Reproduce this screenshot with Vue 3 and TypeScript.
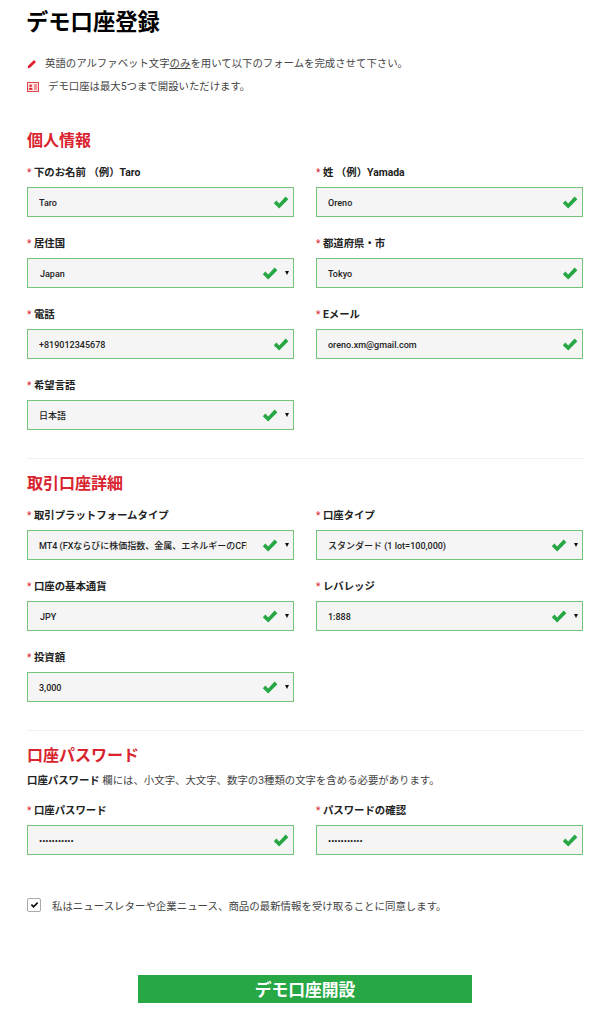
<script setup lang="ts">
interface Field { label: string; value: string; select?: boolean; full?: boolean; pad?: boolean }
const personal: Field[] = [
  { label: '下のお名前 （例）Taro', value: 'Taro' },
  { label: '姓 （例）Yamada', value: 'Oreno' },
  { label: '居住国', value: 'Japan', select: true, pad: true },
  { label: '都道府県・市', value: 'Tokyo' },
  { label: '電話', value: '+819012345678' },
  { label: 'Eメール', value: 'oreno.xm@gmail.com' },
  { label: '希望言語', value: '日本語', select: true },
]
const account: Field[] = [
  { label: '取引プラットフォームタイプ', value: 'MT4 (FXならびに株価指数、金属、エネルギーのCFD取引)', select: true },
  { label: '口座タイプ', value: 'スタンダード (1 lot=100,000)', select: true },
  { label: '口座の基本通貨', value: 'JPY', select: true, pad: true },
  { label: 'レバレッジ', value: '1:888', select: true },
  { label: '投資額', value: '3,000', select: true },
]
const password: Field[] = [
  { label: '口座パスワード', value: '•••••••••••' },
  { label: 'パスワードの確認', value: '•••••••••••' },
]
const sections = [
  { title: '個人情報', fields: personal, note: false },
  { title: '取引口座詳細', fields: account, note: false },
  { title: '口座パスワード', fields: password, note: true },
]
</script>

<template>
  <main class="page">
    <h1 class="title">デモ口座登録</h1>
    <p class="info first">
      <svg class="pencil" viewBox="0 0 10 10"><path d="M7 1l2 2-5.6 5.6-2.9.9.9-2.9z" fill="#d9232e" /></svg>
      <span>英語のアルファベット文字<u>のみ</u>を用いて以下のフォームを完成させて下さい。</span>
    </p>
    <p class="info second">
      <svg class="card" viewBox="0 0 12 10">
        <rect x=".5" y=".5" width="11" height="9" fill="#fde8e8" stroke="#e2444f" />
        <circle cx="3.6" cy="3.8" r="1.3" fill="#d9232e" />
        <path d="M1.6 7.8c0-2.6 4-2.6 4 0z" fill="#d9232e" />
        <path d="M7 3h3.2M7 5h3.2M7 7h3.2" stroke="#e2444f" />
      </svg>
      <span>デモ口座は最大5つまで開設いただけます。</span>
    </p>

    <section v-for="(s, i) in sections" :key="s.title" :class="['section', `section-${i}`]">
      <h2 class="heading">{{ s.title }}</h2>
      <p v-if="s.note" class="note"><b>口座パスワード</b> 欄には、小文字、大文字、数字の3種類の文字を含める必要があります。</p>
      <div class="grid">
        <div v-for="f in s.fields" :key="f.label" class="field">
          <label class="label"><i>*</i> {{ f.label }}</label>
          <div :class="['control', { 'is-select': f.select, 'is-pad': f.pad }]">
            <span class="value">{{ f.value }}</span>
            <svg class="check" viewBox="0 0 16 13"><path d="M.8 7.2 3.4 4.6l2.8 2.8L12.6.6 15.4 3.2 6.2 12.6z" fill="#28a745" /></svg>
            <span v-if="f.select" class="caret"></span>
          </div>
        </div>
      </div>
    </section>

    <div class="agree">
      <span class="box">
        <svg viewBox="0 0 12 10"><path d="M1 5.2 2.6 3.7l2.2 2.1L9.5 1 11 2.5 4.8 9z" fill="#111" /></svg>
      </span>
      <span>私はニュースレターや企業ニュース、商品の最新情報を受け取ることに同意します。</span>
    </div>

    <button class="submit" type="button">デモ口座開設</button>
  </main>
</template>

<style>
html, body { margin: 0; background: #fff; }
</style>

<style scoped>
.page {
  box-sizing: border-box;
  width: 608px;
  height: 1024px;
  overflow: hidden;
  padding: 0 25px 0 27px;
  font-family: Roboto, "Liberation Sans", "Noto Sans CJK JP", sans-serif;
  color: #333;
}
.title {
  margin: 0 0 0 -1px;
  padding-top: 6px;
  height: 34px;
  font-size: 22.3px;
  line-height: 32px;
  font-weight: 700;
  color: #000;
}
.info {
  display: flex;
  align-items: center;
  margin: 0;
  height: 16px;
  font-size: 10.4px;
  line-height: 16px;
  color: #444;
}
.first { margin-top: 16px; }
.second { margin-top: 7px; }
.pencil { width: 10px; height: 10px; margin-right: 8px; }
.card { width: 12px; height: 10px; margin-right: 9px; }
.section { box-sizing: border-box; border-bottom: 1px solid #f0f0f0; }
.section-0 { margin-top: 36px; height: 328px; }
.section-1 { margin-top: 15px; height: 257px; }
.section-2 { margin-top: 15px; border-bottom: 0; height: 150px; }
.heading {
  margin: 0;
  font-size: 16px;
  line-height: 20px;
  font-weight: 700;
  color: #d9232e;
}
.note {
  margin: 7px 0 0;
  font-size: 10.4px;
  line-height: 16px;
  color: #444;
}
.note b { color: #222; }
.grid {
  display: grid;
  grid-template-columns: 267px 267px;
  column-gap: 22px;
  row-gap: 20px;
  margin-top: 15px;
}
.label {
  display: block;
  height: 21px;
  font-size: 10.4px;
  line-height: 14px;
  font-weight: 700;
  color: #222;
}
.label i {
  font-style: normal;
  font-weight: 400;
  font-size: 10px;
  color: #d9232e;
}
.control {
  box-sizing: border-box;
  display: flex;
  align-items: center;
  height: 30px;
  border: 1px solid #74c47a;
  background: #f5f5f5;
  padding-left: 11px;
  padding-right: 4px;
}
.value {
  flex: 1;
  min-width: 0;
  overflow: hidden;
  white-space: nowrap;
  padding-top: 1px;
  font-size: 9px;
  font-weight: 500;
  color: #222;
}
.is-select .value { margin-right: 15px; }
.is-pad .value { padding-left: 1px; }
.is-select .check { margin-right: 1px; }
.check { width: 16px; height: 13px; flex: none; }
.caret {
  flex: none;
  width: 0;
  height: 0;
  margin: 0 0 0 6px;
  border-left: 2.5px solid transparent;
  border-right: 2.5px solid transparent;
  border-top: 4px solid #111;
}
.agree {
  display: flex;
  align-items: center;
  height: 18px;
  font-size: 10.45px;
  color: #444;
}
.box {
  box-sizing: border-box;
  display: flex;
  align-items: center;
  justify-content: center;
  width: 14px;
  height: 14px;
  margin-right: 11px;
  border: 1px solid #aaa;
  border-radius: 2px;
  background: #fff;
}
.box svg { width: 9px; height: 8px; }
.submit {
  display: block;
  width: 334px;
  height: 28px;
  margin: 61px 0 0 111px;
  padding: 0;
  border: 0;
  background: #28a745;
  color: #fff;
  font-family: inherit;
  font-size: 16.8px;
  font-weight: 700;
}
</style>
